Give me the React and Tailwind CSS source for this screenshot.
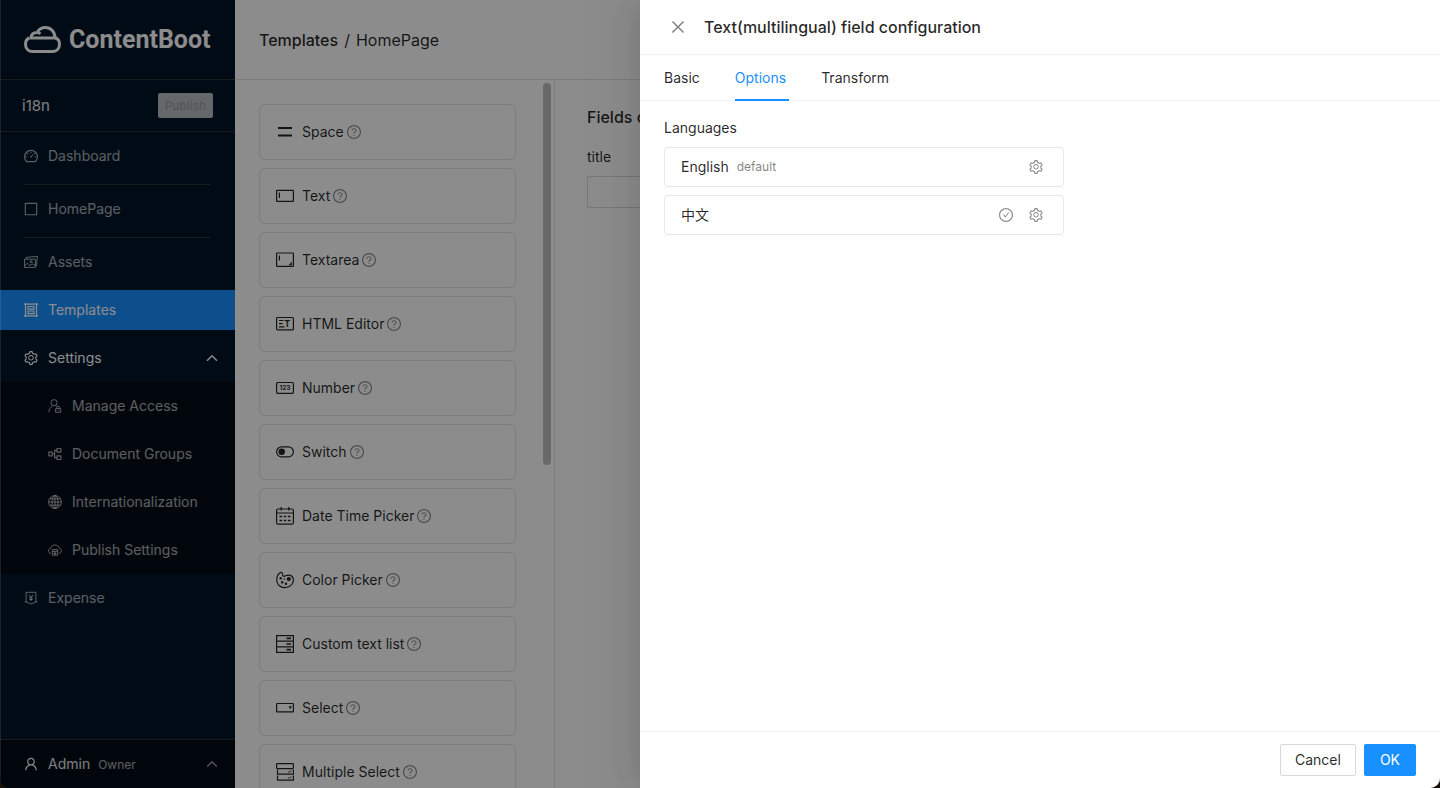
import React, { useState } from "react";
import {
  AiOutlineBorder,
  AiOutlineCheckCircle,
  AiOutlineClose,
  AiOutlineDashboard,
  AiOutlineQuestionCircle,
  AiOutlineSetting,
  AiOutlineUser,
} from "react-icons/ai";
import { ChevronUp } from "lucide-react";

// line icons for the sidebar, drawn on a 14px grid with a 1px margin
function MenuIcon({ children }) {
  return (
    <svg viewBox="-1 -1 16 16" className="size-4 shrink-0" fill="none" stroke="currentColor" strokeWidth="1" strokeLinejoin="round" aria-hidden="true">
      {children}
    </svg>
  );
}

const AssetsIcon = () => (
  <MenuIcon>
    <path d="M.6 4.2h10.8v8.2H.6zM2.3 4V2.3l11.1-.9-.9 9.2-1 .2" />
    <path d="M.8 10.6l2.6-2.3 2.4 2.2 2.6-1.6 2.9 1.6" />
    <circle cx="7.2" cy="6.7" r="1" />
  </MenuIcon>
);

const TemplatesIcon = () => (
  <MenuIcon>
    <path d="M1.5 0v14M12.5 0v14M0 1.2h14M0 12.8h14" strokeWidth="1.2" />
    <path d="M4 3.5h6v2.6H4zM4 8h6v2.6H4z" strokeWidth="1.2" />
  </MenuIcon>
);

const AccessIcon = () => (
  <MenuIcon>
    <circle cx="6" cy="3.7" r="3.1" />
    <path d="M.8 13.2c.2-3 1.6-5 3.8-6M7.6 6.6l1 .7" />
    <path d="M7.6 9.7h5.2v3.6H7.6zM8.8 9.6V8.4c0-1.7 2.8-1.7 2.8 0v1.2M10.2 11v1" />
  </MenuIcon>
);

const GroupsIcon = () => (
  <MenuIcon>
    <path d="M.8 5.2h3.4v3.6H.8zM9 1.5h3.8v3.6H9zM9 8.9h3.8v3.6H9zM4.2 7h2.4M9 3.3H6.6v7.4H9" strokeWidth="1.2" />
  </MenuIcon>
);

const GlobeIcon = () => (
  <MenuIcon>
    <circle cx="7" cy="7" r="6.4" />
    <ellipse cx="7" cy="7" rx="3" ry="6.4" />
    <path d="M7 .6v12.8M.6 7h12.8M1.5 3.9h11M1.5 10.1h11" />
  </MenuIcon>
);

const PublishIcon = () => (
  <MenuIcon>
    <path d="M2.9 10.4C1.5 10.2.6 9.2.6 7.8c0-1.3.8-2.2 2-2.5C3.1 3.2 4.8 2 7 2s3.9 1.2 4.4 3.3c1.2.3 2 1.200 2 2.500 0 1.400-.9 2.400-2.300 2.600" />
    <path d="M4.300 6.500h5.400v5.700H4.300zM4.300 8.400h5.400M5.500 10.300h3M7 8.400v3.800" />
  </MenuIcon>
);

const ExpenseIcon = () => (
  <MenuIcon>
    <path d="M2.100 11V1.300h9.800V11M.6 10.900h1.500L7 13l4.900-2.100h1.500" />
    <path d="M4.900 3.600L7 6.500l2.100-2.900M7 6.500v3.700M5.300 6.800h3.400M5.300 8.500h3.400" />
  </MenuIcon>
);

// 18px icons for the field types
function FieldIcon({ children }) {
  return (
    <svg viewBox="0 0 18 18" className="size-[18px] shrink-0" fill="none" stroke="currentColor" strokeWidth="1.2" aria-hidden="true">
      {children}
    </svg>
  );
}

const fields = [
  {
    name: "Space",
    icon: <path d="M2 5h14M2 12.500h14" strokeWidth="1.800" />,
  },
  {
    name: "Text",
    icon: (
      <>
        <rect x=".6" y="3.400" width="16.800" height="11" rx=".5" />
        <path d="M3.400 5.500v5.500" />
      </>
    ),
  },
  {
    name: "Textarea",
    icon: (
      <>
        <rect x=".6" y="2" width="16.800" height="13.400" rx=".5" />
        <path d="M3.400 4.500v5" />
        <path d="M15.800 10.800v3.400h-3.200z" fill="currentColor" stroke="none" />
      </>
    ),
  },
  {
    name: "HTML Editor",
    icon: (
      <>
        <rect x=".6" y="2.500" width="16.800" height="12.400" rx="1" />
        <path d="M3 5.500h4.500M3 8.600h3.500M3 11.800h5.500" />
        <text x="8.200" y="12.300" fontSize="9" fontWeight="700" fontFamily="Inter, sans-serif" fill="currentColor" stroke="none">T</text>
      </>
    ),
  },
  {
    name: "Number",
    icon: (
      <>
        <rect x=".6" y="3.500" width="16.800" height="10.800" rx="1" />
        <text x="9" y="11.400" fontSize="6.500" fontWeight="700" textAnchor="middle" fontFamily="Inter, sans-serif" fill="currentColor" stroke="none">123</text>
      </>
    ),
  },
  {
    name: "Switch",
    icon: (
      <>
        <rect x=".6" y="3.800" width="16.800" height="10" rx="5" />
        <circle cx="5.700" cy="8.800" r="3.200" fill="currentColor" stroke="none" />
      </>
    ),
  },
  {
    name: "Date Time Picker",
    icon: (
      <>
        <rect x=".6" y="2" width="16.800" height="15.200" rx="1.500" />
        <path d="M.6 6h16.800M5.200 0v3.600M12.800 0v3.600" />
        <path d="M3.500 9.500h2.600M7.700 9.500h2.600M11.900 9.500h2.600M3.500 13.500h2.600M7.700 13.500h2.600M11.900 13.500h2.600" strokeWidth="1.400" />
      </>
    ),
  },
  {
    name: "Color Picker",
    icon: (
      <>
        <path d="M4.500 1.500C2.500 2.600.7 5 .7 8.900c0 4.600 3.600 7.700 8 7.700 5.300 0 8.700-3.500 8.700-7.300 0-3.200-2.100-5.200-5.200-5.200-2 0-2.800 1.200-4.300 1.200-1.900 0-1.200-2-1.600-3.200C6 1.300 5.200 1.100 4.500 1.500z" />
        <g fill="currentColor" stroke="none">
          <circle cx="12.800" cy="8" r="2.100" />
          <circle cx="4.700" cy="7.300" r="1.200" />
          <circle cx="6.200" cy="11.200" r="1.200" />
          <circle cx="10" cy="12.700" r="1.200" />
          <circle cx="8.300" cy="8" r=".8" />
        </g>
      </>
    ),
  },
  {
    name: "Custom text list",
    icon: (
      <>
        <path d="M.6.600h16.800v16.800H.6zM.6 6.200h16.800M.6 11.800h16.800" />
        <path d="M10.500 3.400h4.500M10.500 9h4.500M10.500 14.600h4.500" strokeWidth="1.600" />
      </>
    ),
  },
  {
    name: "Select",
    icon: (
      <>
        <rect x=".6" y="4.500" width="16.800" height="8.400" rx=".5" />
        <path d="M12.600 7.300h3.400l-1.700 2.900z" fill="currentColor" stroke="none" />
      </>
    ),
  },
  {
    name: "Multiple Select",
    icon: (
      <>
        <rect x=".6" y=".6" width="16.800" height="5" rx=".8" />
        <path d="M1.500 6.500v4.700h15.900V6.500M1.500 12.500v4.700h15.900v-4.700" />
        <path d="M12 8.300l1.200 1.200 2-2.100M12 14.300l1.200 1.200 2-2.100" strokeWidth="1" />
      </>
    ),
  },
];

const menu = [
  { label: "Dashboard", icon: <AiOutlineDashboard className="size-4" />, divider: true },
  { label: "HomePage", icon: <AiOutlineBorder className="size-4" />, divider: true },
  { label: "Assets", icon: <AssetsIcon /> },
  { label: "Templates", icon: <TemplatesIcon />, active: true },
];

const settingsMenu = [
  { label: "Manage Access", icon: <AccessIcon /> },
  { label: "Document Groups", icon: <GroupsIcon /> },
  { label: "Internationalization", icon: <GlobeIcon /> },
  { label: "Publish Settings", icon: <PublishIcon /> },
];

function MenuLink({ item, nested }) {
  return (
    <a
      href="#"
      className={`flex h-10 items-center gap-[9px] ${nested ? "pl-[47px]" : "pl-[23px]"} ${item.active ? "bg-[#1890ff] text-white" : "text-white/65"}`}
    >
      {item.icon}
      {item.label}
    </a>
  );
}

function Sidebar() {
  const [open, setOpen] = useState(true);

  return (
    <aside className="flex w-[235px] shrink-0 flex-col bg-[#001529] text-white">
      <div className="flex h-20 items-center gap-2 border-b border-[#303438] pl-6">
        <svg viewBox="0 0 37 27" className="h-[27px] w-[37px]" fill="none" stroke="currentColor" strokeWidth="3" strokeLinejoin="round" aria-hidden="true">
          <path d="M5.500 12C3 12.800 1.500 15 1.500 18c0 4.500 3 7.500 7 7.500h20c4 0 7-3 7-7.500 0-3-1.500-5.200-4-6" />
          <path d="M7 12h24c0-6-4-10.500-9.500-10.500-4 0-6.800 2-8.200 5C9.800 6.200 7 8.300 7 12zM13.300 6.500c1.200.1 2.200.6 3 1.500" />
        </svg>
        <span className="font-[Roboto,sans-serif] text-[25px] leading-8 font-bold">ContentBoot</span>
      </div>

      <div className="flex h-13 items-center justify-between border-b border-[#303438] px-[22px]">
        <span className="text-[15px] text-white/90">i18n</span>
        <button disabled className="h-[25px] rounded-xs bg-[#b8bcc0] px-[7px] text-xs text-[#94989c]">
          Publish
        </button>
      </div>

      <nav className="flex flex-1 flex-col gap-2 overflow-hidden pt-1">
        {menu.map((item) => (
          <React.Fragment key={item.label}>
            <MenuLink item={item} />
            {item.divider && <hr className="mx-6 -mb-1 border-[#303438]" />}
          </React.Fragment>
        ))}
        <button onClick={() => setOpen(!open)} className="flex h-10 items-center gap-[9px] pr-[14px] pl-[23px]">
          <AiOutlineSetting className="size-4" />
          Settings
          <ChevronUp className={`ml-auto size-[18px] ${open ? "" : "rotate-180"}`} />
        </button>
        {open && (
          <div className="-my-1 flex flex-col gap-2 bg-[#000c17] py-1">
            {settingsMenu.map((item) => (
              <MenuLink key={item.label} item={item} nested />
            ))}
          </div>
        )}
        <MenuLink item={{ label: "Expense", icon: <ExpenseIcon /> }} />
      </nav>

      <button className="flex h-[49px] items-center gap-[9px] border-t border-[#303438] bg-[#000c17] pr-[14px] pl-[23px]">
        <AiOutlineUser className="size-4" />
        <span className="flex items-baseline gap-2 text-white/90">
          Admin <small className="text-xs text-white/65">Owner</small>
        </span>
        <ChevronUp className="ml-auto size-[18px] text-white/65" strokeWidth={1.5} />
      </button>
    </aside>
  );
}

function FieldCard({ field }) {
  return (
    <li className="flex h-14 shrink-0 items-center rounded-md border border-[#e3e3e3] pl-4">
      <FieldIcon>{field.icon}</FieldIcon>
      <span className="pl-2">{field.name}</span>
      <AiOutlineQuestionCircle className="ml-0.5 size-4 text-black/45" />
    </li>
  );
}

function Content() {
  return (
    <main className="flex min-w-0 flex-1 flex-col bg-white">
      <header className="flex h-20 shrink-0 items-center gap-1.5 border-b border-[#e0e0e0] pl-6 text-base">
        <a href="#" className="font-medium">Templates</a>
        <span>/</span>
        <span>HomePage</span>
      </header>
      <div className="flex min-h-0 flex-1">
        <div className="relative w-80 shrink-0 overflow-hidden border-r border-[#e0e0e0]">
          <ul className="flex flex-col gap-2 py-6 pr-[38px] pl-6">
            {fields.map((field) => (
              <FieldCard key={field.name} field={field} />
            ))}
          </ul>
          {/* scroll thumb */}
          <div className="absolute top-[3px] right-[3px] h-[54%] w-2 rounded-full bg-[#c0c0c0]" />
        </div>
        <section className="flex-1 px-8 pt-6">
          <h2 className="pt-px text-base font-medium">Fields c</h2>
          <label htmlFor="title" className="mt-[17px] mb-2 block">title</label>
          <input id="title" className="h-8 w-full rounded-xs border border-[#d9d9d9]" />
        </section>
      </div>
    </main>
  );
}

const tabs = ["Basic", "Options", "Transform"];

function LanguageRow({ name, isDefault }) {
  return (
    <li className="flex h-10 items-center rounded-sm border border-[#e8e8e8] px-4">
      <span>{name}</span>
      {isDefault && <span className="pl-2 text-xs text-black/50">default</span>}
      <div className="ml-auto flex gap-[14px] pr-[3px] text-black/45">
        {!isDefault && (
          <button aria-label="Set as default">
            <AiOutlineCheckCircle className="size-4" />
          </button>
        )}
        <button aria-label="Language settings">
          <AiOutlineSetting className="size-4" />
        </button>
      </div>
    </li>
  );
}

function Drawer() {
  const [tab, setTab] = useState("Options");

  return (
    <div role="dialog" aria-labelledby="drawer-title" className="absolute inset-y-0 right-0 flex w-[800px] max-w-full flex-col bg-white shadow-[-6px_0_16px_-8px_rgba(0,0,0,0.08),-9px_0_28px_rgba(0,0,0,0.05),-12px_0_48px_16px_rgba(0,0,0,0.03)]">
      <header className="flex h-[55px] shrink-0 items-center border-b border-[#f0f0f0] pl-[29px]">
        <button aria-label="Close" className="text-black/50">
          <AiOutlineClose className="size-[18px]" />
        </button>
        <h1 id="drawer-title" className="pl-[17px] text-base font-medium">Text(multilingual) field configuration</h1>
      </header>

      <div role="tablist" className="flex h-[46px] shrink-0 gap-8 border-b border-[#f0f0f0] px-6">
        {tabs.map((name) => (
          <button
            key={name}
            role="tab"
            aria-selected={tab === name}
            onClick={() => setTab(name)}
            className={`-mb-px border-b-2 pt-0.5 pr-[3px] ${tab === name ? "border-[#1890ff] text-[#1890ff]" : "border-transparent"}`}
          >
            {name}
          </button>
        ))}
      </div>

      <div className="flex-1 px-6 pt-4">
        <h2>Languages</h2>
        <ul className="mt-2 flex w-[400px] max-w-full flex-col gap-2">
          <LanguageRow name="English" isDefault />
          <LanguageRow name="中文" />
        </ul>
      </div>

      <footer className="flex shrink-0 justify-end gap-2 border-t border-[#f0f0f0] px-6 py-3">
        <button className="h-8 rounded-xs border border-[#d9d9d9] px-[14px]">Cancel</button>
        <button className="h-8 rounded-xs bg-[#1890ff] px-4 text-white">OK</button>
      </footer>
    </div>
  );
}

export default function App() {
  return (
    <div className="bg-[#16120a]">
      <div className="relative flex h-screen overflow-hidden rounded-b-[10px] font-[Inter,'Noto_Sans_CJK_SC',sans-serif] text-sm leading-[22px] text-black/85">
        <Sidebar />
        <Content />
        <div className="absolute inset-0 border-l border-white/10 bg-black/45" />
        <Drawer />
      </div>
    </div>
  );
}
